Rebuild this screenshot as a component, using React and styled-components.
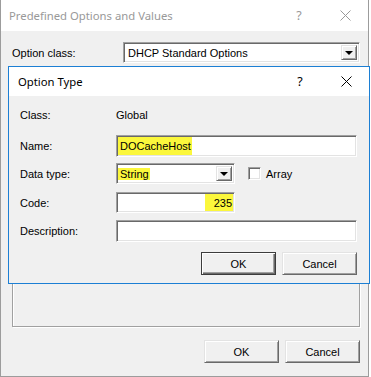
import React from 'react'
import styled, { createGlobalStyle } from 'styled-components'

const Global = createGlobalStyle`
  html, body { margin: 0; padding: 0; background: #ffffff; }
  * { box-sizing: border-box; }
`

const Window = styled.div`
  position: relative;
  width: 369px;
  height: 377px;
  background: #f0f0f0;
  border: 1px solid #9c9c9c;
  border-top: none;
  font-family: "Liberation Sans", Arial, sans-serif;
  font-size: 11px;
  color: #000;
`

const TitleBar = styled.div`
  display: flex;
  align-items: center;
  height: ${p => p.$h}px;
  background: #fff;
  padding-left: ${p => p.$pad}px;
  color: ${p => (p.$inactive ? '#999999' : '#000000')};
  font-family: "Noto Sans", "Open Sans", sans-serif;
  font-size: 11.3px;
`

const TitleText = styled.div`
  flex: 1;
  white-space: nowrap;
`

const CaptionButton = styled.div`
  width: 46px;
  height: 100%;
  display: flex;
  align-items: center;
  justify-content: center;
  font-size: 12.5px;
`

const OuterBody = styled.div`
  padding: 11px 8px 0 11px;
`

const FieldRow = styled.div`
  display: flex;
  align-items: center;
`

const Label = styled.div`
  width: ${p => p.$w}px;
  flex: none;
  white-space: nowrap;
`

const Sunken = styled.div`
  display: flex;
  align-items: stretch;
  width: ${p => p.$w}px;
  height: ${p => p.$h}px;
  background: #fff;
  border: 1px solid;
  border-color: #a0a0a0 #ffffff #ffffff #a0a0a0;
  box-shadow: inset 1px 1px 0 #696969, inset -1px -1px 0 #e3e3e3;
  padding: 1px;
  justify-content: ${p => (p.$right ? 'flex-end' : 'flex-start')};
`

const ComboText = styled.div`
  flex: 1;
  display: flex;
  align-items: center;
  padding-left: ${p => p.$pad || 0}px;
  white-space: nowrap;
`

const Mark = styled.span`
  display: flex;
  align-items: center;
  background: #fbf73c;
  padding: 0 ${p => p.$pr || 1}px 0 ${p => p.$pl || 1}px;
`

const DropButton = styled.div`
  width: 16px;
  margin: 1px 1px 1px 0;
  background: #f0f0f0;
  border: 1px solid;
  border-color: #e3e3e3 #696969 #696969 #e3e3e3;
  box-shadow: inset 1px 1px 0 #fff, inset -1px -1px 0 #a0a0a0;
  display: flex;
  align-items: center;
  justify-content: center;
`

const Arrow = styled.div`
  width: 0;
  height: 0;
  border-left: 4px solid transparent;
  border-right: 4px solid transparent;
  border-top: 4px solid #000;
  margin-top: 1px;
`

const ListArea = styled.div`
  margin-top: 12px;
  width: 348px;
  height: 252px;
  border: 1px solid #a0a0a0;
  box-shadow: 1px 1px 0 #fff, inset 1px 1px 0 #fff;
`

const ButtonRow = styled.div`
  display: flex;
  justify-content: flex-end;
  gap: 6px;
  margin-top: ${p => p.$mt}px;
`

const Button = styled.div`
  width: 75px;
  height: 23px;
  display: flex;
  align-items: center;
  justify-content: center;
  background: #f0f0f0;
  border: 1px solid;
  border-color: ${p => (p.$default ? '#3c3c3c' : '#e3e3e3 #696969 #696969 #e3e3e3')};
  box-shadow: ${p =>
    p.$default
      ? 'inset 1px 1px 0 #fff, inset -1px -1px 0 #696969, inset -2px -2px 0 #a0a0a0'
      : 'inset 1px 1px 0 #fff, inset -1px -1px 0 #a0a0a0'};
`

const Dialog = styled.div`
  position: absolute;
  left: 7px;
  top: 66px;
  width: 362px;
  height: 218px;
  border: 1px solid #1c7fd4;
  background: #f0f0f0;
`

const DialogBody = styled.div`
  padding: 9px 12px 0 11px;
  display: flex;
  flex-direction: column;
`

const Row = styled.div`
  display: flex;
  align-items: center;
  height: ${p => p.$h}px;
  margin-top: ${p => p.$mt || 0}px;
`

const Check = styled.div`
  width: 13px;
  height: 13px;
  margin-left: 13px;
  background: #fff;
  border: 1px solid;
  border-color: #a0a0a0 #fff #fff #a0a0a0;
  box-shadow: inset 1px 1px 0 #696969, inset -1px -1px 0 #e3e3e3;
`

const CheckLabel = styled.div`
  margin-left: 5px;
`

function CloseIcon() {
  return (
    <svg width="11" height="11" viewBox="0 0 11 11">
      <path d="M0.5 0.5 L10.5 10.5 M10.5 0.5 L0.5 10.5" stroke="currentColor" strokeWidth="1" fill="none" />
    </svg>
  )
}

function Combo({ w, h, children, pad }) {
  return (
    <Sunken $w={w} $h={h}>
      <ComboText $pad={pad}>{children}</ComboText>
      <DropButton>
        <Arrow />
      </DropButton>
    </Sunken>
  )
}

export default function App() {
  return (
    <>
      <Global />
      <Window>
        <TitleBar $h={31} $pad={8} $inactive>
          <TitleText>Predefined Options and Values</TitleText>
          <CaptionButton>?</CaptionButton>
          <CaptionButton>
            <CloseIcon />
          </CaptionButton>
        </TitleBar>
        <OuterBody>
          <FieldRow>
            <Label $w={111}>Option class:</Label>
            <Combo w={237} h={21} pad={3}>DHCP Standard Options</Combo>
          </FieldRow>
          <ListArea />
          <ButtonRow $mt={13}>
            <Button>OK</Button>
            <Button>Cancel</Button>
          </ButtonRow>
        </OuterBody>

        <Dialog>
          <TitleBar $h={29} $pad={9}>
            <TitleText>Option Type</TitleText>
            <CaptionButton>?</CaptionButton>
            <CaptionButton>
              <CloseIcon />
            </CaptionButton>
          </TitleBar>
          <DialogBody>
            <Row $h={20}>
              <Label $w={96}>Class:</Label>
              <div>Global</div>
            </Row>
            <Row $h={22} $mt={10}>
              <Label $w={96}>Name:</Label>
              <Sunken $w={241} $h={22}>
                <Mark $pl={2}>DOCacheHost</Mark>
              </Sunken>
            </Row>
            <Row $h={21} $mt={6}>
              <Label $w={96}>Data type:</Label>
              <Combo w={119} h={21}>
                <Mark $pl={2} $pr={1}>String</Mark>
              </Combo>
              <Check />
              <CheckLabel>Array</CheckLabel>
            </Row>
            <Row $h={21} $mt={8}>
              <Label $w={96}>Code:</Label>
              <Sunken $w={119} $h={21} $right>
                <Mark $pl={9} $pr={1}>235</Mark>
              </Sunken>
            </Row>
            <Row $h={22} $mt={7}>
              <Label $w={96}>Description:</Label>
              <Sunken $w={241} $h={22} />
            </Row>
            <ButtonRow $mt={10}>
              <Button $default>OK</Button>
              <Button>Cancel</Button>
            </ButtonRow>
          </DialogBody>
        </Dialog>
      </Window>
    </>
  )
}
